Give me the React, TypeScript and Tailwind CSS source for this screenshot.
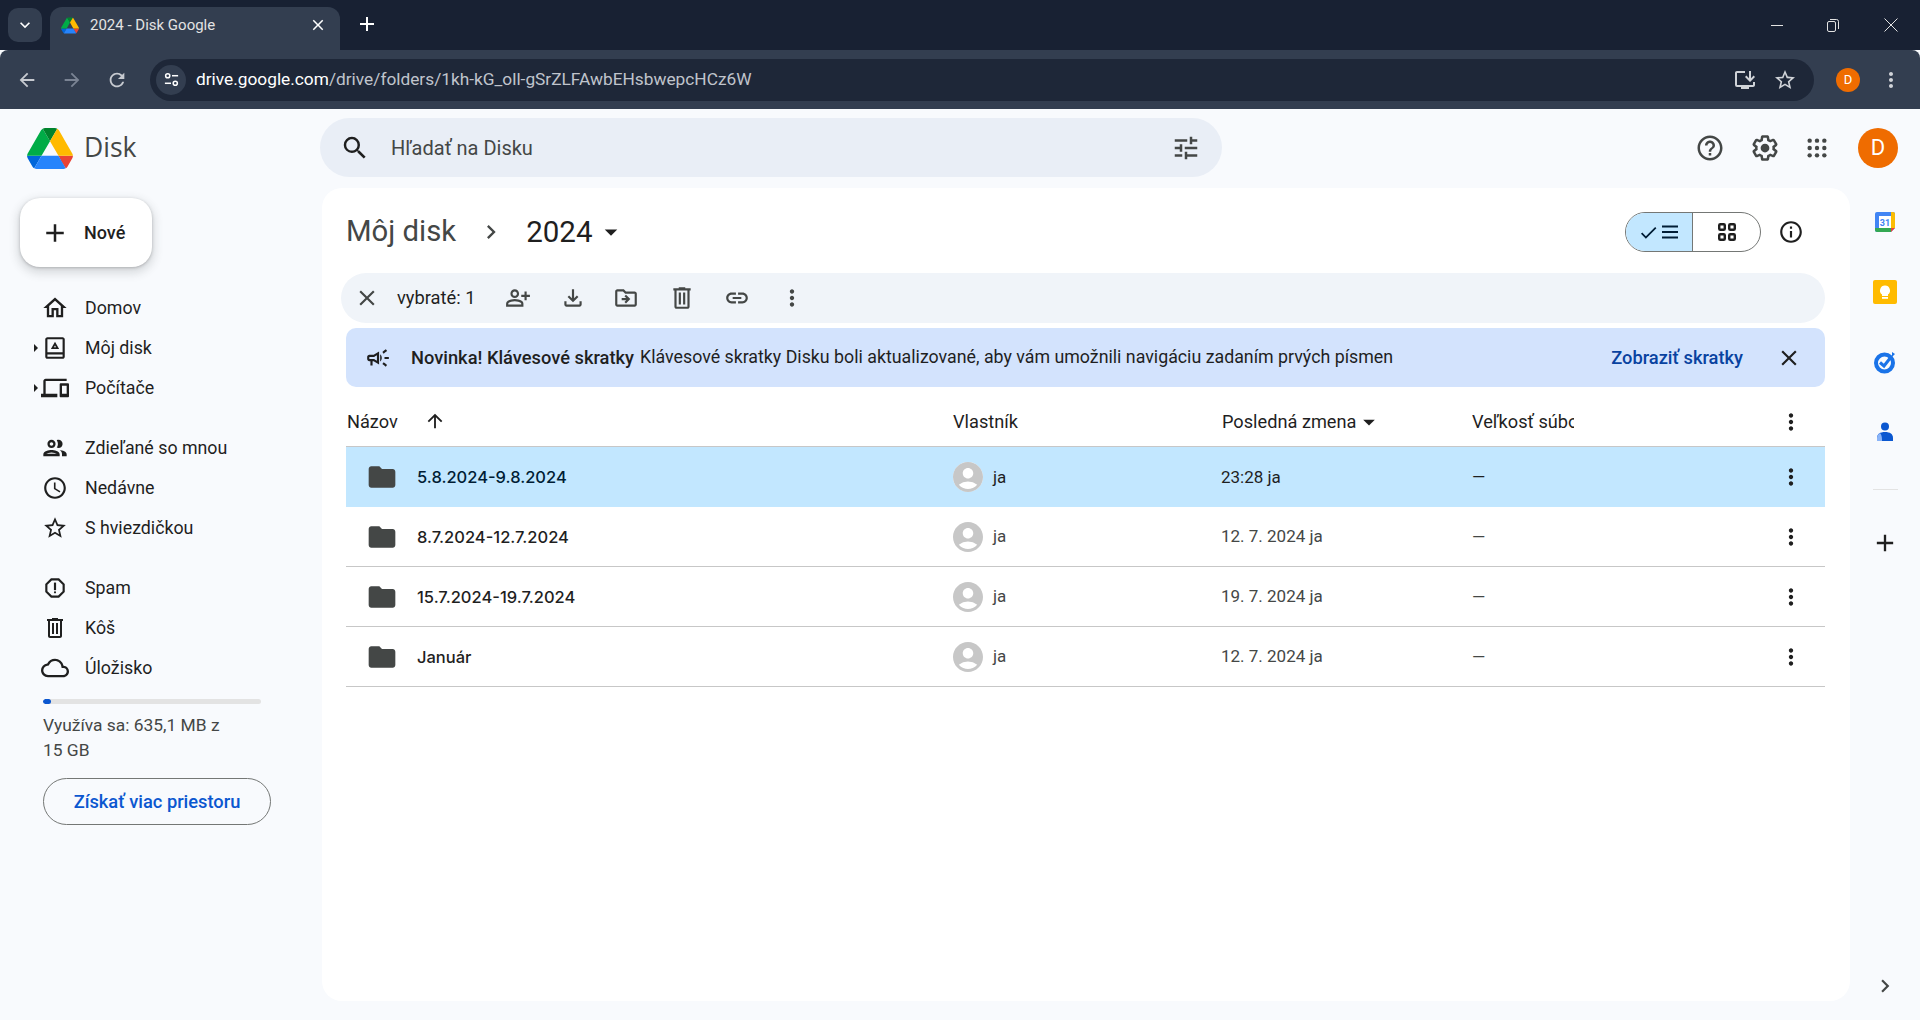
import React from 'react';
import {
  MdAdd, MdArrowBack, MdArrowDropDown, MdArrowForward, MdArrowUpward, MdCheck, MdChevronRight, MdClose, MdFolder,
  MdHelpOutline, MdInfoOutline, MdKeyboardArrowDown, MdMoreVert, MdOutlineAccessTime,
  MdOutlineCampaign, MdOutlineCloud, MdOutlineDevices, MdOutlineDriveFileMove, MdOutlineFileDownload,
  MdOutlineHome, MdOutlineInstallDesktop, MdOutlineLink, MdOutlinePeople, MdOutlinePersonAddAlt,
  MdOutlineReport, MdOutlineStarBorder, MdRefresh, MdSearch, MdTune, MdAccountCircle,
} from 'react-icons/md';

const DriveLogo: React.FC<{ className?: string }> = ({ className }) => (
  <svg viewBox="0 0 87.3 78" className={className}>
    <path d="m6.6 66.85 3.85 6.65c.8 1.4 1.95 2.5 3.3 3.3l13.75-23.8h-27.5c0 1.55.4 3.1 1.2 4.5z" fill="#0066da" />
    <path d="m43.65 25-13.75-23.8c-1.35.8-2.5 1.9-3.3 3.3l-25.4 44a9.06 9.06 0 0 0 -1.2 4.5h27.5z" fill="#00ac47" />
    <path d="m73.55 76.8c1.35-.8 2.5-1.9 3.3-3.3l1.6-2.75 7.65-13.25c.8-1.4 1.2-2.95 1.2-4.5h-27.502l5.852 11.5z" fill="#ea4335" />
    <path d="m43.65 25 13.75-23.8c-1.35-.8-2.9-1.2-4.5-1.2h-18.5c-1.6 0-3.15.45-4.5 1.2z" fill="#00832d" />
    <path d="m59.8 53h-32.3l-13.75 23.8c1.35.8 2.9 1.2 4.5 1.2h50.8c1.6 0 3.15-.45 4.5-1.2z" fill="#2684fc" />
    <path d="m73.4 26.5-12.7-22c-.8-1.4-1.95-2.5-3.3-3.3l-13.75 23.8 16.15 28h27.45c0-1.55-.4-3.1-1.2-4.5z" fill="#ffba00" />
  </svg>
);

const TrashIcon: React.FC<{ className?: string }> = ({ className }) => (
  <svg viewBox="0 0 24 24" className={className} fill="currentColor">
    <path d="M15 3V2H9v1H4v2h1v15c0 1.1.9 2 2 2h10c1.1 0 2-.9 2-2V5h1V3h-5zm2 17H7V5h10v15zM9 7h2v11H9V7zm4 0h2v11h-2V7z" />
  </svg>
);

const MyDriveIcon: React.FC<{ className?: string }> = ({ className }) => (
  <svg viewBox="0 0 24 24" className={className} fill="currentColor">
    <path d="M19 2H5C3.9 2 3 2.9 3 4v16c0 1.1.9 2 2 2h14c1.1 0 2-.9 2-2V4c0-1.1-.9-2-2-2zm0 2v12H5V4h14zM5 20v-2h14v2H5z" />
    <path d="M12 6.2 8.2 13h7.6L12 6.2zm0 3.4 1 1.6h-2l1-1.6z" />
  </svg>
);

const SettingsIcon: React.FC<{ className?: string }> = ({ className }) => (
  <svg viewBox="0 0 24 24" className={className} fill="currentColor">
    <path d="M13.85 22.25h-3.7c-.74 0-1.36-.54-1.45-1.27l-.27-1.89c-.27-.14-.53-.29-.79-.46l-1.8.72c-.7.26-1.47-.03-1.81-.65L2.2 15.53c-.35-.66-.2-1.44.36-1.88l1.53-1.19c-.01-.15-.02-.3-.02-.46 0-.15.01-.31.02-.46l-1.52-1.19c-.59-.45-.74-1.26-.37-1.88l1.85-3.19c.34-.62 1.11-.9 1.79-.63l1.81.73c.26-.17.52-.32.78-.46l.27-1.91c.09-.7.71-1.25 1.44-1.25h3.7c.74 0 1.36.54 1.45 1.27l.27 1.89c.27.14.53.29.79.46l1.8-.72c.71-.26 1.48.03 1.82.65l1.84 3.18c.36.66.2 1.44-.36 1.88l-1.52 1.19c.01.15.02.3.02.46s-.01.31-.02.46l1.52 1.19c.56.45.72 1.23.37 1.86l-1.86 3.22c-.34.62-1.11.9-1.8.63l-1.8-.72c-.26.17-.52.32-.78.46l-.27 1.91c-.1.68-.72 1.22-1.46 1.22zm-3.23-2h2.76l.37-2.55.53-.22c.44-.18.88-.44 1.34-.78l.45-.34 2.38.96 1.38-2.4-2.03-1.58.07-.56c.03-.26.06-.51.06-.78s-.03-.53-.06-.78l-.07-.56 2.03-1.58-1.39-2.4-2.39.96-.45-.35c-.42-.32-.87-.58-1.33-.77l-.52-.22-.37-2.55h-2.76l-.37 2.55-.53.21c-.44.19-.88.44-1.34.79l-.45.33-2.38-.95-1.39 2.39 2.03 1.58-.07.56a7 7 0 0 0-.06.79c0 .26.02.53.06.78l.07.56-2.03 1.58 1.38 2.4 2.39-.96.45.35c.43.33.86.58 1.33.77l.53.22.38 2.55z" />
    <circle cx="12" cy="12" r="3.5" />
  </svg>
);

const AppsIcon: React.FC<{ className?: string }> = ({ className }) => (
  <svg viewBox="0 0 24 24" className={className} fill="currentColor">
    {[4, 12, 20].map((y) => [4, 12, 20].map((x) => <circle key={`${x}-${y}`} cx={x} cy={y} r="2.4" />))}
  </svg>
);

const SiteInfoIcon: React.FC<{ className?: string }> = ({ className }) => (
  <svg viewBox="0 0 18 18" className={className} fill="none" stroke="currentColor" strokeWidth="1.6">
    <circle cx="5" cy="5" r="2.2" />
    <path d="M9.5 5H16" />
    <path d="M2 13h6.5" />
    <circle cx="13" cy="13" r="2.2" />
  </svg>
);

const ListIcon: React.FC<{ className?: string }> = ({ className }) => (
  <svg viewBox="0 0 18 18" className={className} fill="none" stroke="currentColor" strokeWidth="2.2">
    <path d="M1 3.5h16M1 9h16M1 14.5h16" />
  </svg>
);

const GridIcon: React.FC<{ className?: string }> = ({ className }) => (
  <svg viewBox="0 0 18 18" className={className} fill="none" stroke="currentColor" strokeWidth="2.2">
    <rect x="2" y="2" width="5" height="5" rx="1" />
    <rect x="11" y="2" width="5" height="5" rx="1" />
    <rect x="2" y="11" width="5" height="5" rx="1" />
    <rect x="11" y="11" width="5" height="5" rx="1" />
  </svg>
);

const navGroups = [
  [
    { label: 'Domov', icon: <MdOutlineHome className="w-[28px] h-[28px]" /> },
    { label: 'Môj disk', icon: <MyDriveIcon className="w-[26px] h-[26px]" />, caret: true },
    { label: 'Počítače', icon: <MdOutlineDevices className="w-[28px] h-[28px]" />, caret: true },
  ],
  [
    { label: 'Zdieľané so mnou', icon: <MdOutlinePeople className="w-[28px] h-[28px]" /> },
    { label: 'Nedávne', icon: <MdOutlineAccessTime className="w-[26px] h-[26px]" /> },
    { label: 'S hviezdičkou', icon: <MdOutlineStarBorder className="w-[26px] h-[26px]" /> },
  ],
  [
    { label: 'Spam', icon: <MdOutlineReport className="w-[26px] h-[26px]" /> },
    { label: 'Kôš', icon: <TrashIcon className="w-[24px] h-[24px]" /> },
    { label: 'Úložisko', icon: <MdOutlineCloud className="w-[28px] h-[28px]" /> },
  ],
];

const rows = [
  { name: '5.8.2024-9.8.2024', modified: '23:28 ja', selected: true },
  { name: '8.7.2024-12.7.2024', modified: '12. 7. 2024 ja' },
  { name: '15.7.2024-19.7.2024', modified: '19. 7. 2024 ja' },
  { name: 'Január', modified: '12. 7. 2024 ja' },
];

const Sidebar = () => (
  <aside className="w-[322px] shrink-0 flex flex-col">
    <div className="h-[79px] flex items-center pl-[27px] shrink-0">
      <DriveLogo className="w-[46px] h-[41px]" />
      <span className="ml-[11px] pb-[2px] text-[26.5px] text-[#444746] font-['Open_Sans',sans-serif]">Disk</span>
    </div>
    <button className="ml-[20px] w-[132px] h-[69px] mt-[10px] bg-white rounded-[20px] shadow-[0_1px_3px_rgba(60,64,67,0.3),0_4px_8px_3px_rgba(60,64,67,0.15)] flex items-center pl-[20px] text-[#1f1f1f] shrink-0">
      <MdAdd className="w-[30px] h-[30px]" />
      <span className="ml-[14px] text-[18px] font-medium">Nové</span>
    </button>
    <nav className="mt-[21px] flex flex-col gap-[20px]">
      {navGroups.map((group, i) => (
        <div key={i} className="flex flex-col">
          {group.map((item) => (
            <div key={item.label} className="relative h-[40px] flex items-center text-[#1f1f1f]">
              {item.caret && <span className="absolute left-[34px] top-[16px] w-0 h-0 border-y-[4px] border-y-transparent border-l-[4px] border-l-[#1f1f1f]" />}
              <span className="w-[28px] ml-[41px] flex justify-center shrink-0 text-[#1f1f1f]">{item.icon}</span>
              <span className="ml-[16px] text-[17.8px] text-[#1f1f1f]">{item.label}</span>
            </div>
          ))}
        </div>
      ))}
    </nav>
    <div className="ml-[43px] mt-[11px] w-[218px] h-[5px] rounded-full bg-[#e3e3e3] overflow-hidden">
      <div className="w-[8px] h-full rounded-full bg-[#0b57d0]" />
    </div>
    <p className="ml-[43px] mt-[9px] w-[190px] text-[17.4px] leading-[25px] text-[#444746]">Využíva sa: 635,1 MB z 15 GB</p>
    <button className="ml-[43px] mt-[15px] w-[228px] h-[47px] rounded-full border border-[#747775] text-[#0b57d0] text-[18.3px] font-medium">Získať viac priestoru</button>
  </aside>
);

const Toolbar = () => (
  <div className="ml-[19px] w-[1484px] h-[50px] shrink-0 rounded-full bg-[#f0f4f9] flex items-center text-[#1f1f1f]">
    <MdClose className="ml-[13px] w-[26px] h-[26px] text-[#444746]" />
    <span className="ml-[17px] w-[95px] text-[18.3px] whitespace-nowrap">vybraté: 1</span>
    <MdOutlinePersonAddAlt className="ml-[13px] w-[26px] h-[26px] text-[#444746]" />
    <MdOutlineFileDownload className="ml-[29px] w-[26px] h-[26px] text-[#444746]" />
    <MdOutlineDriveFileMove className="ml-[27px] w-[26px] h-[26px] text-[#444746]" />
    <TrashIcon className="ml-[30px] w-[26px] h-[26px] text-[#444746]" />
    <MdOutlineLink className="ml-[29px] w-[26px] h-[26px] text-[#444746]" />
    <MdMoreVert className="ml-[29px] w-[26px] h-[26px] text-[#444746]" />
  </div>
);

const Banner = () => (
  <div className="ml-[24px] mt-[5px] w-[1479px] h-[59px] shrink-0 rounded-[10px] bg-[#d3e3fd] flex items-center text-[#1f1f1f]">
    <MdOutlineCampaign className="ml-[19px] w-[26px] h-[26px] text-[#1f1f1f]" />
    <span className="ml-[20px] text-[18.3px] font-medium whitespace-nowrap">Novinka! Klávesové skratky</span>
    <span className="ml-[6px] text-[17.8px] whitespace-nowrap text-[#1f1f1f]">Klávesové skratky Disku boli aktualizované, aby vám umožnili navigáciu zadaním prvých písmen</span>
    <span className="ml-auto text-[18.3px] font-medium text-[#0842a0] whitespace-nowrap">Zobraziť skratky</span>
    <MdClose className="ml-[33px] mr-[23px] w-[26px] h-[26px] text-[#1f1f1f]" />
  </div>
);

const FileTable = () => (
  <div className="ml-[24px] w-[1479px] text-[17px]">
    <div className="h-[60px] pt-[10px] flex items-center border-b border-[#c7c7c7] text-[#1f1f1f] text-[18.2px]">
      <div className="w-[607px] flex items-center pl-px">
        <span>Názov</span>
        <MdArrowUpward className="ml-[26px] w-[22px] h-[22px]" />
      </div>
      <div className="w-[269px]">Vlastník</div>
      <div className="w-[250px] flex items-center">
        <span>Posledná zmena</span>
        <MdArrowDropDown className="-ml-[1px] w-[28px] h-[28px]" />
      </div>
      <div className="w-[102px] overflow-hidden whitespace-nowrap">Veľkosť súboru</div>
      <div className="ml-auto w-[69px] flex justify-center"><MdMoreVert className="w-[26px] h-[26px]" /></div>
    </div>
    {rows.map((r) => (
      <div key={r.name} className={`h-[60px] flex items-center ${r.selected ? 'bg-[#c2e7ff] text-[#001d35]' : 'border-b border-[#c7c7c7] text-[#1f1f1f]'}`}>
        <div className="w-[607px] flex items-center">
          <MdFolder className="ml-[20px] w-[32px] h-[32px] text-[#444746]" />
          <span className="ml-[19px] pt-px font-['Inter',sans-serif] text-[16.5px] font-medium">{r.name}</span>
        </div>
        <div className="w-[269px] flex items-center">
          <span className={`w-[30px] h-[30px] rounded-full flex items-center justify-center ${r.selected ? 'bg-white' : ''}`}>
            <MdAccountCircle className="w-[36px] h-[36px] shrink-0 text-[#c7c7c7]" />
          </span>
          <span className={`ml-[10px] pt-px ${r.selected ? 'text-[#1f1f1f]' : 'text-[#444746]'}`}>ja</span>
        </div>
        <div className={`w-[250px] pt-px -ml-px mr-px ${r.selected ? 'text-[#1f1f1f]' : 'text-[#444746]'}`}>{r.modified}</div>
        <div className={`w-[102px] pt-[2px] ${r.selected ? 'text-[#1f1f1f]' : 'text-[#444746]'}`}>—</div>
        <div className="ml-auto w-[69px] flex justify-center"><MdMoreVert className="w-[26px] h-[26px] text-[#1f1f1f]" /></div>
      </div>
    ))}
  </div>
);

const SidePanel = () => (
  <div className="w-[70px] flex flex-col items-center relative">
    <svg viewBox="0 0 24 24" className="mt-[22px] w-[24px] h-[24px]">
      <path d="M2 4a2 2 0 0 1 2-2h16a2 2 0 0 1 2 2v14l-4 4H4a2 2 0 0 1-2-2z" fill="#4285f4" />
      <path d="M18 2h2a2 2 0 0 1 2 2v14h-4z" fill="#fbbc04" />
      <path d="M2 18h16v4H4a2 2 0 0 1-2-2z" fill="#34a853" />
      <path d="M18 18h4l-4 4z" fill="#ea4335" />
      <rect x="6" y="6" width="12" height="12" fill="#fff" />
      <text x="12" y="16" fontSize="9" textAnchor="middle" fill="#4285f4" fontFamily="Roboto, sans-serif" fontWeight="700">31</text>
    </svg>
    <svg viewBox="0 0 24 24" className="mt-[46px] w-[24px] h-[24px]">
      <rect x="0" y="0" width="24" height="24" rx="2" fill="#ffbb00" />
      <path d="M12 5.5a5 5 0 0 0-3 9v1.5h6V14.5a5 5 0 0 0-3-9z" fill="#fff" />
      <rect x="9" y="17" width="6" height="1.8" fill="#fff" />
    </svg>
    <svg viewBox="0 0 24 24" className="mt-[46px] w-[24px] h-[24px]">
      <circle cx="11.5" cy="13" r="8.5" fill="none" stroke="#1a73e8" strokeWidth="4" />
      <path d="M7 12.5l4 3.5 7-9" fill="none" stroke="#1a73e8" strokeWidth="3" />
      <path d="M19 2l3 2-3 3z" fill="#1a73e8" />
    </svg>
    <svg viewBox="0 0 24 24" className="mt-[46px] w-[24px] h-[24px]">
      <circle cx="12" cy="6.5" r="4" fill="#0b57d0" />
      <path d="M4 21v-3c0-4 3-6 8-6s8 2 8 6v3z" fill="#0b57d0" />
      <path d="M4 21v-3c0-2 1-4 3-5 2 2 2 6 2 8z" fill="#8ab4f8" />
    </svg>
    <div className="mt-[45px] w-[25px] h-px bg-[#e3e3e3]" />
    <MdAdd className="mt-[39px] w-[28px] h-[28px] text-[#1f1f1f]" />
    <MdChevronRight className="absolute bottom-[21px] w-[26px] h-[26px] text-[#444746]" />
  </div>
);

export default function App() {
  return (
    <div className="w-[1920px] h-[1020px] overflow-hidden flex flex-col bg-[#f8fafd] font-['Roboto',sans-serif]">
      {/* browser chrome */}
      <div className="h-[50px] bg-[#182133] flex items-end shrink-0">
        <div className="ml-[8px] mb-[8px] w-[34px] h-[34px] rounded-[10px] bg-[#333e50] flex items-center justify-center text-white">
          <MdKeyboardArrowDown className="w-[20px] h-[20px]" />
        </div>
        <div className="ml-[8px] w-[290px] h-[43px] pb-[7px] rounded-t-[12px] bg-[#333e50] flex items-center text-[#e3e3e3]">
          <DriveLogo className="ml-[11px] w-[18px] h-[17px]" />
          <span className="ml-[11px] text-[15px]">2024 - Disk Google</span>
          <MdClose className="ml-auto mr-[13px] w-[18px] h-[18px] text-white" />
        </div>
        <MdAdd className="ml-[15px] mb-[14px] w-[24px] h-[24px] text-white" />
        <div className="ml-auto mb-[18px] flex items-center text-[#e3e3e3]">
          <span className="w-[12px] h-px bg-[#e3e3e3]" />
          <svg viewBox="0 0 14 14" className="ml-[43px] w-[14px] h-[14px]" fill="none" stroke="currentColor" strokeWidth="1">
            <rect x="1.5" y="3.5" width="8" height="10" rx="1.5" />
            <path d="M4 1.5h6.5a2 2 0 0 1 2 2V11" />
          </svg>
          <svg viewBox="0 0 14 14" className="ml-[44px] mr-[22px] w-[14px] h-[14px]" fill="none" stroke="currentColor" strokeWidth="1">
            <path d="M0.5 0.5l13 13M13.5 0.5l-13 13" />
          </svg>
        </div>
      </div>
      <div className="h-[59px] bg-[#333e50] flex items-center rounded-t-[8px] shrink-0 text-[#c7c7c7]">
        <MdArrowBack className="ml-[16px] w-[22px] h-[22px] text-[#c7cad0]" />
        <MdArrowForward className="ml-[23px] w-[22px] h-[22px] text-[#7b8494]" />
        <MdRefresh className="ml-[23px] w-[22px] h-[22px] text-[#c7cad0]" />
        <div className="ml-[22px] w-[1664px] h-[42px] rounded-full bg-[#1e2738] flex items-center">
          <span className="ml-[6px] w-[30px] h-[30px] rounded-full bg-[#333e50] flex items-center justify-center">
            <SiteInfoIcon className="w-[17px] h-[17px] text-white" />
          </span>
          <span className="ml-[10px] text-[17.3px] text-white">drive.google.com<span className="text-[#c0c4cc]">/drive/folders/1kh-kG_oll-gSrZLFAwbEHsbwepcHCz6W</span></span>
          <MdOutlineInstallDesktop className="ml-auto w-[24px] h-[24px] text-[#d0d3d8]" />
          <MdOutlineStarBorder className="ml-[16px] mr-[17px] w-[24px] h-[24px] text-[#d0d3d8]" />
        </div>
        <span className="ml-[22px] w-[24px] h-[24px] rounded-full bg-[#ef6c00] text-white text-[13px] flex items-center justify-center">D</span>
        <MdMoreVert className="ml-[19px] w-[24px] h-[24px] text-[#d0d3d8]" />
      </div>
      {/* app */}
      <div className="flex-1 flex min-h-0">
        <Sidebar />
        <div className="flex-1 min-w-0 flex flex-col">
          <div className="h-[77px] mb-[2px] flex items-center shrink-0">
            <div className="-ml-[2px] w-[902px] h-[59px] rounded-full bg-[#e9eef6] flex items-center">
              <MdSearch className="ml-[20px] w-[30px] h-[30px] text-[#1f1f1f]" />
              <span className="ml-[21px] pt-px text-[20px] text-[#444746]">Hľadať na Disku</span>
              <MdTune className="ml-auto mr-[21px] w-[30px] h-[30px] text-[#444746]" />
            </div>
            <MdHelpOutline className="ml-auto w-[30px] h-[30px] text-[#444746]" />
            <SettingsIcon className="ml-[25px] w-[30px] h-[30px] text-[#444746]" />
            <AppsIcon className="ml-[26px] w-[22px] h-[22px] text-[#444746]" />
            <span className="ml-[30px] mr-[22px] w-[40px] h-[40px] rounded-full bg-[#ef6c00] text-white text-[22px] flex items-center justify-center">D</span>
          </div>
          <div className="flex-1 flex min-h-0">
            <main className="w-[1528px] h-[813px] bg-white rounded-[20px] flex flex-col">
              <div className="h-[85px] pt-[3px] flex items-center shrink-0 pl-[24px]">
                <span className="text-[29.3px] text-[#444746]">Môj disk</span>
                <MdChevronRight className="ml-[21px] w-[28px] h-[28px] text-[#444746]" />
                <span className="ml-[21px] text-[29.5px] text-[#1f1f1f]">2024</span>
                <MdArrowDropDown className="ml-[3px] w-[30px] h-[30px] text-[#1f1f1f]" />
                <div className="ml-auto flex items-center h-[40px] w-[136px] rounded-full border border-[#747775] overflow-hidden text-[#001d35]">
                  <div className="w-[67px] h-full bg-[#c2e7ff] border-r border-[#747775] flex items-center justify-center">
                    <MdCheck className="w-[21px] h-[21px] -ml-[2px]" />
                    <ListIcon className="ml-[2px] w-[18px] h-[18px]" />
                  </div>
                  <div className="flex-1 flex items-center justify-center"><GridIcon className="w-[20px] h-[20px] text-[#1f1f1f]" /></div>
                </div>
                <MdInfoOutline className="ml-[17px] mr-[46px] w-[26px] h-[26px] text-[#1f1f1f]" />
              </div>
              <Toolbar />
              <Banner />
              <FileTable />
            </main>
            <SidePanel />
          </div>
        </div>
      </div>
    </div>
  );
}
